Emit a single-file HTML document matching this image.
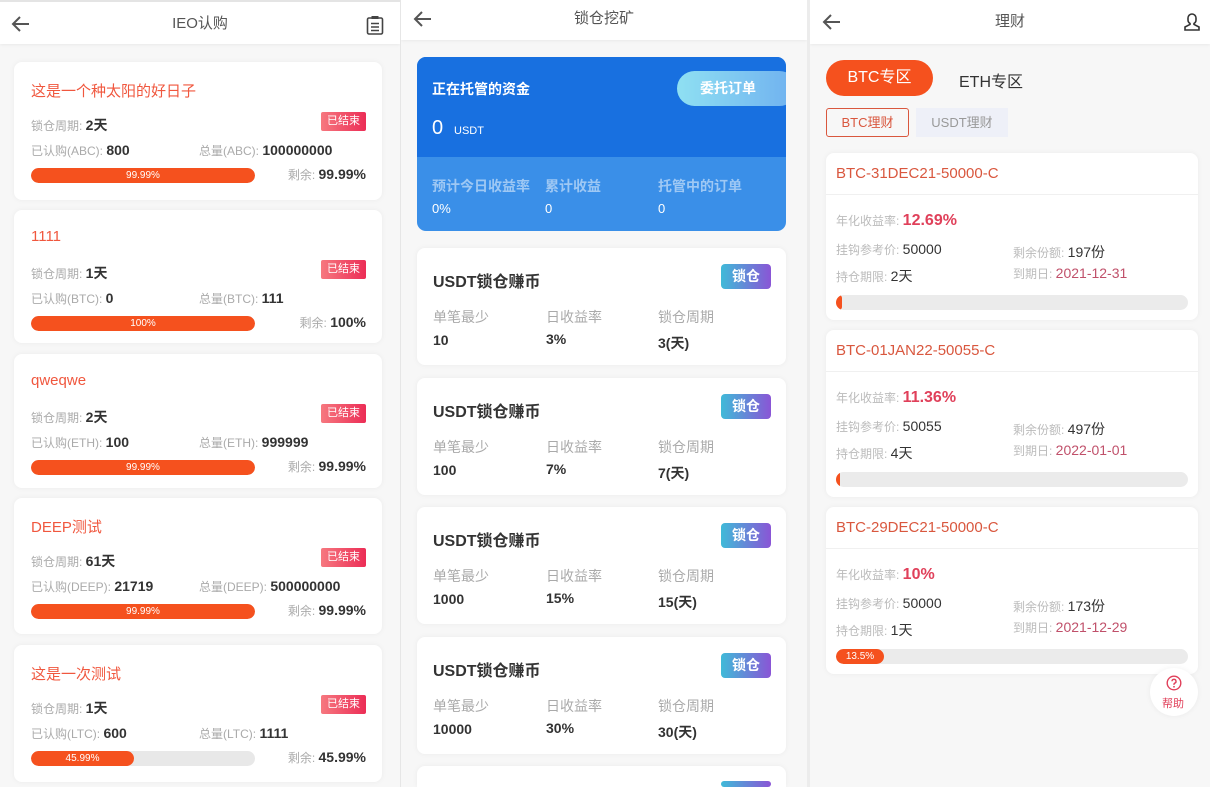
<!DOCTYPE html>
<html style="width:1210px;height:787px;overflow:hidden"><head><meta charset="utf-8"><style>
*{margin:0;padding:0;box-sizing:border-box}
body{width:1210px;height:787px;overflow:hidden;background:#f6f6f6;font-family:"Liberation Sans","Noto Sans CJK SC",sans-serif;position:relative}
#wrap{position:absolute;left:0;top:0;width:1210px;height:787px;overflow:hidden}
.abs{position:absolute}
.panel{position:absolute;top:0;height:787px;background:#f7f7f7;overflow:hidden}
.hdr{position:absolute;left:0;right:0;top:0;background:#fff;box-shadow:0 1px 3px rgba(0,0,0,.06);text-align:center;color:#555;font-size:15px}
.card{position:absolute;background:#fff;border-radius:8px;box-shadow:0 0 6px rgba(0,0,0,.05);overflow:hidden}
.t{position:absolute;white-space:nowrap}
.lb{color:#aaa;font-size:12px}
.v{color:#333;font-size:14px;font-weight:bold}
.bar{position:absolute;left:17px;width:224px;height:15px;border-radius:8px;background:#e8e8e8;overflow:hidden}
.bar i{display:block;height:100%;background:#f5511e;color:#fff;font-size:10px;font-style:normal;text-align:center;line-height:15px;border-radius:8px}
.end{position:absolute;right:16px;width:45px;height:19px;background:linear-gradient(90deg,#f6787f,#ec2d56);color:#fff;font-size:11px;text-align:center;line-height:19px;border-radius:2px}
.badge{position:absolute;left:304px;top:16px;width:50px;height:25px;border-radius:4px;background:linear-gradient(90deg,#3fbad8,#8a55d6);color:#fff;font-size:14px;font-weight:bold;text-align:center;line-height:25px}
.mt{color:#333;font-size:16px;font-weight:bold}
.ml{color:#aaa;font-size:14px}
.mv{color:#333;font-size:14px;font-weight:bold}
.rl{color:#bbb;font-size:12px}
.rv{color:#333;font-size:14px}
</style></head><body><div id="wrap">

<div class="panel" style="left:0;width:400px">
 <div class="hdr" style="height:42px;line-height:44px;top:2px">IEO认购
  <svg class="abs" style="left:11px;top:13px" width="20" height="18" viewBox="0 0 20 18"><path d="M18 9H3M9 2L2 9l7 7" stroke="#555" stroke-width="2" fill="none"/></svg>
  <svg class="abs" style="left:366px;top:13px" width="18" height="20" viewBox="0 0 18 20"><rect x="1.5" y="3" width="15" height="16" rx="1.5" stroke="#444" stroke-width="1.6" fill="none"/><rect x="5.5" y="1" width="7" height="3" fill="#444"/><path d="M5 8.5h8M5 12h8M5 15.5h8" stroke="#444" stroke-width="1.4"/></svg>
 </div>
 <div class="abs" style="left:0;top:0;width:400px;height:2px;background:#e4e4e4"></div>
</div>

<div class="panel" style="left:401px;width:406px">
 <div class="hdr" style="height:40px;line-height:38px">锁仓挖矿
  <svg class="abs" style="left:12px;top:10px" width="20" height="18" viewBox="0 0 20 18"><path d="M18 9H3M9 2L2 9l7 7" stroke="#555" stroke-width="2" fill="none"/></svg>
 </div>
</div>

<div class="panel" style="left:810px;width:400px">
 <div class="hdr" style="height:44px;line-height:44px">理财
  <svg class="abs" style="left:12px;top:13px" width="20" height="18" viewBox="0 0 20 18"><path d="M18 9H3M9 2L2 9l7 7" stroke="#555" stroke-width="2" fill="none"/></svg>
  <svg class="abs" style="left:372px;top:12px" width="20" height="20" viewBox="0 0 20 20"><path d="M10 2a4 4 0 0 0-4 4v2a4 4 0 0 0 2 3.4v1L3 15v3h14v-3l-5-2.6v-1A4 4 0 0 0 14 8V6a4 4 0 0 0-4-4z" stroke="#333" stroke-width="1.6" fill="none"/></svg>
 </div>
</div>
<div class="abs" style="left:400px;top:0;width:1px;height:787px;background:#e6e6e6"></div>
<div class="abs" style="left:807px;top:0;width:3px;height:787px;background:#ececec"></div>

<div id="L"></div><div id="M"></div><div id="R"></div>

<div class="abs" style="left:417px;top:57px;width:369px;height:174px;border-radius:9px;overflow:hidden;background:#3a8fe8">
 <div class="abs" style="left:0;top:0;width:369px;height:100px;background:#1870e0"></div>
 <div class="t" style="left:15px;top:22px;color:#fff;font-size:14px;font-weight:bold">正在托管的资金</div>
 <div class="t" style="left:15px;top:60px;color:#fff;font-size:20px">0</div>
 <div class="t" style="left:37px;top:68px;color:#fff;font-size:11px">USDT</div>
 <div class="abs" style="left:260px;top:14px;width:120px;height:35px;border-radius:18px;background:linear-gradient(90deg,#8fe0f2,#6fb0f0);color:#fff;font-size:14px;font-weight:bold;line-height:35px;padding-left:23px">委托订单</div>
 <div class="t" style="left:15px;top:119px;color:#9ec8f4;font-size:14px;font-weight:bold">预计今日收益率</div>
 <div class="t" style="left:128px;top:119px;color:#9ec8f4;font-size:14px;font-weight:bold">累计收益</div>
 <div class="t" style="left:241px;top:119px;color:#9ec8f4;font-size:14px;font-weight:bold">托管中的订单</div>
 <div class="t" style="left:15px;top:144px;color:#fff;font-size:13px">0%</div>
 <div class="t" style="left:128px;top:144px;color:#fff;font-size:13px">0</div>
 <div class="t" style="left:241px;top:144px;color:#fff;font-size:13px">0</div>
</div>

<div class="abs" style="left:1150px;top:668px;width:48px;height:48px;border-radius:50%;background:#fff;box-shadow:0 0 6px rgba(0,0,0,.06)">
 <svg class="abs" style="left:16px;top:7px" width="16" height="16" viewBox="0 0 16 16"><circle cx="8" cy="8" r="6.8" stroke="#e0405a" stroke-width="1.4" fill="none"/><path d="M6 6.3a2 2 0 1 1 2.7 1.9c-.5.2-.7.6-.7 1.1v.6" stroke="#e0405a" stroke-width="1.4" fill="none"/><circle cx="8" cy="11.8" r=".9" fill="#e0405a"/></svg>
 <div class="t" style="left:12px;top:27px;color:#e0405a;font-size:11px">帮助</div>
</div>

<div class="abs" style="left:826px;top:60px;width:107px;height:36px;border-radius:18px;background:#f5511e;color:#fff;font-size:16px;text-align:center;line-height:36px">BTC专区</div>
<div class="t" style="left:959px;top:68px;color:#333;font-size:16px">ETH专区</div>
<div class="abs" style="left:826px;top:108px;width:83px;height:29px;border:1px solid #d9573e;border-radius:3px;color:#d9573e;font-size:13px;text-align:center;line-height:27px">BTC理财</div>
<div class="abs" style="left:916px;top:108px;width:92px;height:29px;background:#eef0f8;color:#999;font-size:13px;text-align:center;line-height:29px">USDT理财</div>

<script>
var L=[["这是一个种太阳的好日子","2天","ABC","800","100000000","99.99%",100,"99.99%",62,138],
["1111","1天","BTC","0","111","100%",100,"100%",210,133],
["qweqwe","2天","ETH","100","999999","99.99%",100,"99.99%",354,134],
["DEEP测试","61天","DEEP","21719","500000000","99.99%",100,"99.99%",498,136],
["这是一次测试","1天","LTC","600","1111","45.99%",46,"45.99%",645,137]];
var h="";
L.forEach(function(c){var y=c[8];
h+='<div class="card" style="left:14px;top:'+y+'px;width:368px;height:'+c[9]+'px">'+
'<div class="t" style="left:17px;top:18px;color:#f0573e;font-size:15px">'+c[0]+'</div>'+
'<div class="t lb" style="left:17px;top:53px">锁仓周期: <span class="v">'+c[1]+'</span></div>'+
'<div class="end" style="top:50px">已结束</div>'+
'<div class="t lb" style="left:17px;top:80px">已认购('+c[2]+'): <span class="v">'+c[3]+'</span></div>'+
'<div class="t lb" style="left:185px;top:80px">总量('+c[2]+'): <span class="v">'+c[4]+'</span></div>'+
'<div class="bar" style="top:106px"><i style="width:'+c[6]+'%">'+c[7]+'</i></div>'+
'<div class="t lb" style="right:16px;top:104px">剩余: <span class="v">'+c[5]+'</span></div></div>';});
document.getElementById("L").innerHTML=h;
var M=[["10","3%","3(天)"],["100","7%","7(天)"],["1000","15%","15(天)"],["10000","30%","30(天)"],["","",""]];
h="";M.forEach(function(c,i){var y=248+i*129.5;
if(i==4){h+='<div class="card" style="left:417px;top:766px;width:369px;height:21px;border-radius:8px 8px 0 0"><div class="badge" style="top:15px;height:6px"></div></div>';return;}
h+='<div class="card" style="left:417px;top:'+y+'px;width:369px;height:117px">'+
'<div class="t mt" style="left:16px;top:20px">USDT锁仓赚币</div><div class="badge">锁仓</div>'+
'<div class="t ml" style="left:16px;top:59px">单笔最少</div><div class="t ml" style="left:129px;top:59px">日收益率</div><div class="t ml" style="left:241px;top:59px">锁仓周期</div>'+
'<div class="t mv" style="left:16px;top:84px">'+c[0]+'</div><div class="t mv" style="left:129px;top:83px">'+c[1]+'</div><div class="t mv" style="left:241px;top:85px">'+c[2]+'</div></div>';});
document.getElementById("M").innerHTML=h;
var R=[["BTC-31DEC21-50000-C","12.69%","50000","197份","2天","2021-12-31",2,""],
["BTC-01JAN22-50055-C","11.36%","50055","497份","4天","2022-01-01",1,""],
["BTC-29DEC21-50000-C","10%","50000","173份","1天","2021-12-29",13.5,"13.5%"]];
h="";R.forEach(function(c,i){var y=153+i*177;
h+='<div class="card" style="left:826px;top:'+y+'px;width:372px;height:167px">'+
'<div class="t" style="left:10px;top:12px;color:#d9573e;font-size:15px">'+c[0]+'</div>'+
'<div class="abs" style="left:0;right:0;top:41px;height:1px;background:#f0f0f0"></div>'+
'<div class="t rl" style="left:10px;top:59px">年化收益率: <span style="color:#e0405a;font-size:16px;font-weight:bold">'+c[1]+'</span></div>'+
'<div class="t rl" style="left:10px;top:88px">挂钩参考价: <span class="rv">'+c[2]+'</span></div>'+
'<div class="t rl" style="left:187px;top:89px">剩余份额: <span class="rv">'+c[3]+'</span></div>'+
'<div class="t rl" style="left:10px;top:113px">持仓期限: <span class="rv">'+c[4]+'</span></div>'+
'<div class="t rl" style="left:187px;top:112px">到期日: <span style="color:#c0506a;font-size:14px">'+c[5]+'</span></div>'+
'<div class="abs" style="left:10px;top:142px;width:352px;height:15px;border-radius:8px;background:#ebebeb;overflow:hidden"><i style="display:block;width:'+(c[6]==2?'6px':c[6]==1?'4px':'48px')+';height:100%;background:#f5511e;border-radius:8px;color:#fff;font-size:10px;font-style:normal;text-align:center;line-height:15px">'+c[7]+'</i></div></div>';});
document.getElementById("R").innerHTML=h;
</script>
</div></body></html>
